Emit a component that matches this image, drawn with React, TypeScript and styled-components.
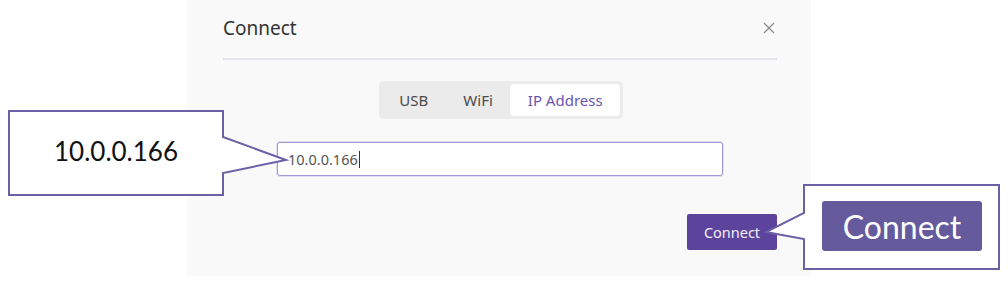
import React from 'react'
import styled, { createGlobalStyle } from 'styled-components'

const GlobalStyle = createGlobalStyle`
  html, body {
    margin: 0;
    padding: 0;
    background: #ffffff;
  }
`

const SPage = styled.div`
  position: relative;
  width: 1008px;
  height: 284px;
  display: flex;
  align-items: flex-start;
  overflow: hidden;
  font-family: "Noto Sans", "Open Sans", sans-serif;
`

const SDialog = styled.div`
  margin-left: 187px;
  width: 624px;
  height: 276px;
  box-sizing: border-box;
  padding: 0 34px 0 36px;
  background: #f9f9f9;
  display: flex;
  flex-direction: column;
`

const SHeader = styled.div`
  height: 58px;
  display: flex;
  align-items: center;
  justify-content: space-between;
  border-bottom: 2px solid #e4e4ea;
`

const STitle = styled.div`
  font-size: 19px;
  color: #333333;
  margin-top: -2px;
`

const SClose = styled.svg`
  width: 12px;
  height: 12px;
  margin-right: 2px;
  margin-top: -3px;
`

const STabs = styled.div`
  align-self: center;
  margin-top: 21px;
  margin-left: 2px;
  display: flex;
  padding: 3px;
  border-radius: 5px;
  background: #ebebeb;
`

const STab = styled.div<{ $active?: boolean }>`
  height: 32px;
  padding: 0 17.5px;
  display: flex;
  align-items: center;
  font-size: 15px;
  border-radius: 4px;
  color: ${(p) => (p.$active ? '#6a54b0' : '#4a4a4a')};
  background: ${(p) => (p.$active ? '#ffffff' : 'transparent')};
`

const SField = styled.div`
  align-self: center;
  margin-top: 23px;
  width: 446px;
  height: 34px;
  box-sizing: border-box;
  padding: 0 10px;
  display: flex;
  align-items: center;
  border: 1px solid #a497d4;
  border-radius: 3px;
  background: #ffffff;
  box-shadow: 0 0 0 1px #e3def3;
  font-size: 14.5px;
  color: #555555;
`

const SCaret = styled.span`
  display: inline-block;
  width: 1px;
  height: 17px;
  margin-left: 1px;
  background: #333333;
`

const SFooter = styled.div`
  margin-top: 38px;
  display: flex;
  justify-content: flex-end;
`

const SPrimaryButton = styled.div`
  width: 90px;
  height: 36px;
  display: flex;
  align-items: center;
  justify-content: center;
  border-radius: 2px;
  background: #5c449c;
  color: #f2eefb;
  font-size: 14.5px;
`

const SOverlay = styled.svg`
  position: absolute;
  left: 0;
  top: 0;
  pointer-events: none;
`

const SCalloutText = styled.div`
  position: absolute;
  left: 9px;
  top: 112px;
  width: 214px;
  height: 82px;
  display: flex;
  align-items: center;
  justify-content: center;
  margin-top: -2px;
  font-family: Lato, "Liberation Sans", sans-serif;
  font-size: 26px;
  color: #111111;
`

const SCalloutButton = styled.div`
  position: absolute;
  left: 822px;
  top: 201px;
  width: 160px;
  height: 50px;
  display: flex;
  align-items: center;
  justify-content: center;
  border-radius: 3px;
  background: #655a9c;
  color: #ffffff;
  font-family: Lato, "Liberation Sans", sans-serif;
  font-size: 32px;
`

const tabs = ['USB', 'WiFi', 'IP Address']

const App = () => {
  return (
    <SPage>
      <GlobalStyle />
      <SDialog>
        <SHeader>
          <STitle>Connect</STitle>
          <SClose viewBox="0 0 12 12">
            <path d="M1 1 L11 11 M11 1 L1 11" stroke="#8a8a8a" strokeWidth="1.3" fill="none" />
          </SClose>
        </SHeader>
        <STabs>
          {tabs.map((t) => (
            <STab key={t} $active={t === 'IP Address'}>{t}</STab>
          ))}
        </STabs>
        <SField>
          10.0.0.166<SCaret />
        </SField>
        <SFooter>
          <SPrimaryButton>Connect</SPrimaryButton>
        </SFooter>
      </SDialog>

      <SOverlay width="1008" height="284" viewBox="0 0 1008 284">
        <path
          d="M9 111 H223 V137 L286 160 L223 173 V195 H9 Z"
          fill="#ffffff"
          stroke="#6b5fa6"
          strokeWidth="2"
          strokeLinejoin="miter"
        />
        <path
          d="M804 185 H999 V269 H804 V239 L766 232 L804 213 Z"
          fill="#ffffff"
          stroke="#6b5fa6"
          strokeWidth="2"
          strokeLinejoin="miter"
        />
      </SOverlay>
      <SCalloutText>10.0.0.166</SCalloutText>
      <SCalloutButton>Connect</SCalloutButton>
    </SPage>
  )
}

export default App
